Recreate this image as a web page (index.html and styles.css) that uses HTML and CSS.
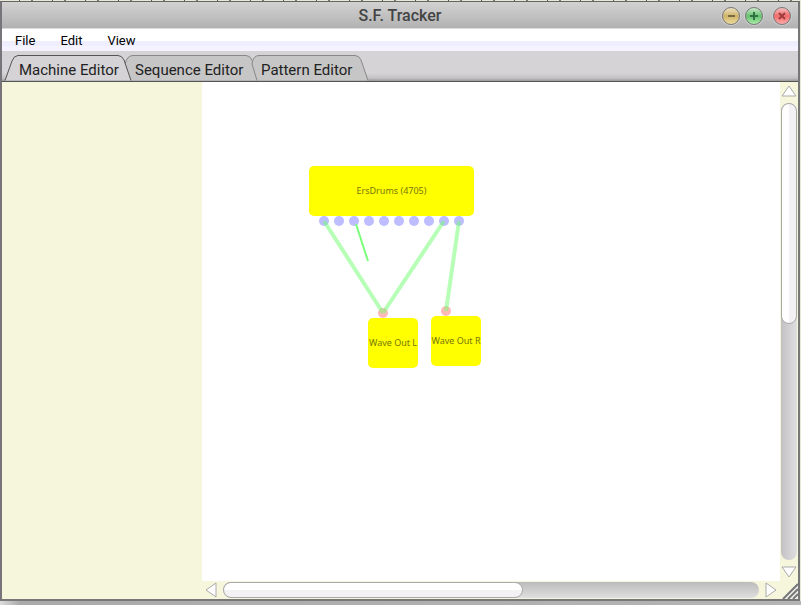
FILE: index.html
```
<!DOCTYPE html>
<html lang="en">
<head>
<meta charset="utf-8">
<title>S.F. Tracker</title>
<link rel="stylesheet" href="styles.css">
</head>
<body>
<div class="window">
  <header class="titlebar">
    <h1>S.F. Tracker</h1>
    <div class="controls">
      <button class="ctl min" aria-label="Minimize"><svg viewBox="0 0 16 16"><path d="M5 8h7"/></svg></button>
      <button class="ctl max" aria-label="Maximize"><svg viewBox="0 0 16 16"><path d="M4 8h8M8 4v8"/></svg></button>
      <button class="ctl close" aria-label="Close"><svg viewBox="0 0 16 16"><path d="M5 5l6 6M11 5l-6 6"/></svg></button>
    </div>
  </header>
  <nav class="menubar">
    <button>File</button><button>Edit</button><button>View</button>
  </nav>
  <div class="tabs" role="tablist">
    <button class="tab machine active" role="tab" aria-selected="true">
      <svg viewBox="0 0 126 26" preserveAspectRatio="none"><path d="M0 25.500L7 6Q9 .5 13 .5H113Q117 .5 119 5L126 25.500"/></svg>
      <span>Machine Editor</span></button>
    <button class="tab sequence" role="tab" aria-selected="false">
      <svg viewBox="0 0 132 26" preserveAspectRatio="none"><path d="M5 25.500L0 9Q2 .5 8 .5H121Q125 .5 127 5L133 25.500"/></svg>
      <span>Sequence Editor</span></button>
    <button class="tab pattern" role="tab" aria-selected="false">
      <svg viewBox="0 0 116 26" preserveAspectRatio="none"><path d="M6 25.500L1 9Q2 .5 8 .5H104Q108 .5 110 5L117 25.500"/></svg>
      <span>Pattern Editor</span></button>
  </div>
  <main class="content">
    <aside class="side"></aside>
    <section class="canvas">
      <svg class="wires" width="578" height="499">
        <path class="wire" d="M122 139L181 231M242 139L181 231M257 139L244 229"/>
        <path class="loose" d="M154 142L166 179"/>
      </svg>
      <div class="node drums">ErsDrums (4705)<div class="ports"><i></i><i></i><i></i><i></i><i></i><i></i><i></i><i></i><i></i><i></i></div></div>
      <div class="node out left"><i class="input"></i>Wave Out L</div>
      <div class="node out right"><i class="input"></i>Wave Out R</div>
    </section>
    <div class="scroll vertical">
      <button aria-label="Scroll up"><svg width="16" height="12"><path d="M8 1L15 11H1Z"/></svg></button>
      <div class="track"><div class="thumb"></div></div>
      <button aria-label="Scroll down"><svg width="16" height="12"><path d="M1 1H15L8 11Z"/></svg></button>
    </div>
    <div class="scroll horizontal">
      <button aria-label="Scroll left"><svg width="12" height="16"><path d="M11 1V15L1 8Z"/></svg></button>
      <div class="track"><div class="thumb"></div></div>
      <button aria-label="Scroll right"><svg width="12" height="16"><path d="M1 1L11 8L1 15Z"/></svg></button>
    </div>
    <svg class="grip" width="18" height="18" viewBox="0 0 18 18"><path class="shine" d="M5 18L18 5M10 18L18 10M15 18L18 15"/><path d="M3 18L18 3M8 18L18 8M13 18L18 13"/></svg>
  </main>
</div>
</body>
</html>
```
FILE: styles.css
```
* { box-sizing: border-box; }
body {
  margin: 0;
  height: 100vh;
  padding: 1px 1px 4px 0;
  background: linear-gradient(90deg, #ddd 0, #aaa 20px, #b4b4b4 100%) bottom / 100% 4px no-repeat, repeating-linear-gradient(90deg, #e8e8d8 0 19px, #555 19px 20px, #e8e8d8 20px 31px, #777 31px 33px);
  font-family: Roboto, sans-serif;
  color: #222;
}
button { border: 0; padding: 0; background: none; font: inherit; color: inherit; }
.window {
  height: 100%;
  display: flex;
  flex-direction: column;
  border: 1px solid #66645f;
  border-left: 2px solid #77757a;
  border-right: 2px solid #777;
  border-bottom: 2px solid #777;
}
.titlebar {
  height: 27px;
  flex: none;
  display: grid;
  grid-template-columns: 1fr auto 1fr;
  align-items: center;
  border-bottom: 1px solid #ddd;
  background: linear-gradient(#d2d2d2, #b2b2b2);
}
h1 { grid-column: 2; margin: 0; font-size: 16px; line-height: 28px; font-weight: 500; color: #444; }
.controls { display: flex; justify-content: flex-end; gap: 5px; padding-right: 7px; }
.ctl { width: 18px; height: 18px; border: 1px solid #777; border-radius: 50%; box-shadow: 0 0 0 1px #cfcfcf; }
.ctl svg { display: block; width: 16px; height: 16px; fill: none; stroke-width: 2; }
.min { background: linear-gradient(#ece2c4, #d0b468 50%, #ecdca0); }
.min svg { stroke: #7a6a40; }
.max { background: linear-gradient(#c8e8c8, #68c070 50%, #a8eca8); }
.max svg { stroke: #2f7440; }
.close { margin-left: 5px; background: linear-gradient(#f6c0c0, #f06c6c 50%, #ffaaaa); }
.close svg { stroke: #a03c3c; }
.menubar {
  height: 22px;
  flex: none;
  display: flex;
  gap: 25px;
  padding-left: 13px;
  font-size: 13px;
  line-height: 24px;
  color: #000;
  background: linear-gradient(#fff 12px, #eef 12px, #eef 17px, #f5f3ff 17px);
}
.tabs {
  height: 31px;
  flex: none;
  display: flex;
  align-items: flex-end;
  padding-left: 3px;
  border-bottom: 1px solid #555;
  background: linear-gradient(#d5d3d6 22px, #c4c2c5 27px, #999 30px);
}
.tab { position: relative; height: 26px; margin-right: -6px; font-size: 15px; line-height: 30px; text-align: left; white-space: nowrap; }
.machine { width: 126px; padding-left: 14px; }
.sequence { width: 132px; padding-left: 10px; }
.pattern { width: 116px; padding-left: 10px; }
.tab.active { z-index: 1; }
.tab svg { position: absolute; inset: 0; width: 100%; height: 100%; fill: #c6c6c6; stroke: #888; overflow: visible; }
.tab.active svg { fill: #d5d3d6; stroke: #555; }
.tab span { position: relative; }
.content {
  flex: 1;
  min-height: 0;
  display: grid;
  grid-template: minmax(0, 1fr) 18px / 200px minmax(0, 1fr) 18px;
  background: #f6f6dd;
}
.side { grid-row: 1 / 3; }
.canvas { position: relative; overflow: hidden; background: #fff; }
.wires { position: absolute; left: 0; top: 0; z-index: 1; fill: none; }
.wire { stroke: rgba(112, 255, 112, .5); stroke-width: 4; }
.loose { stroke: #7cff7c; stroke-width: 2; }
.node {
  position: absolute;
  display: flex;
  align-items: center;
  justify-content: center;
  padding-bottom: 2px;
  background: #ff0;
  border-radius: 5px;
  font-family: "Noto Sans", sans-serif;
  font-size: 9px;
  white-space: nowrap;
  color: #77770a;
}
.drums { left: 107px; top: 84px; width: 165px; height: 50px; }
.out { width: 50px; height: 50px; }
.left { left: 166px; top: 236px; }
.right { left: 229px; top: 234px; }
.ports { position: absolute; top: 100%; left: 10px; display: flex; gap: 5px; }
.ports i, .input { width: 10px; height: 10px; border-radius: 50%; background: #bdbdff; }
.input { position: absolute; bottom: 100%; left: 10px; background: #ffb9b9; }
.scroll { display: flex; align-items: center; }
.vertical { flex-direction: column; padding: 3px 0; }
.horizontal { padding: 0 3px; }
.scroll button { display: flex; flex: none; }
.scroll svg { fill: #fff; stroke: #aaa; }
.track { flex: 1; border-radius: 8px; }
.vertical .track { width: 16px; margin: 6px 0; background: linear-gradient(90deg, #c2c0c3, #e0dfe0); }
.horizontal .track { height: 16px; margin: 0 6px; background: linear-gradient(#bbb, #e0dfe0); }
.thumb { border: 1px solid #aaa; border-radius: 8px; }
.vertical .thumb { width: 16px; height: 221px; background: linear-gradient(90deg, #fff 50%, #f4f1f4 50%); }
.horizontal .thumb { width: 56%; height: 16px; background: linear-gradient(#fff 50%, #f4f1f4 50%); }
.grip { fill: none; stroke: #777; stroke-width: 2; }
.grip .shine { stroke: #eee; }
```
